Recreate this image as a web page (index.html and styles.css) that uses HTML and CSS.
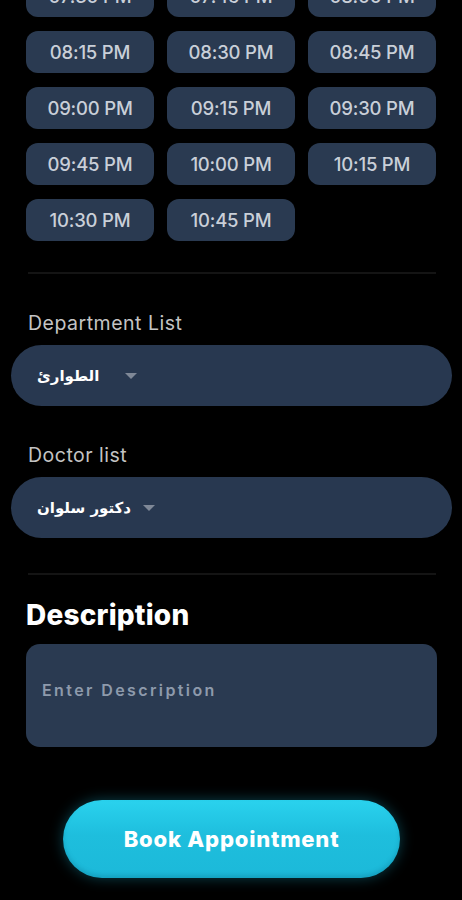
FILE: index.html
```html
<!DOCTYPE html>
<html lang="en">
<head>
<meta charset="utf-8">
<link rel="stylesheet" href="styles.css">
</head>
<body>
<div class="page">
  <div class="slots">
    <div class="slot">07:30 PM</div>
    <div class="slot">07:45 PM</div>
    <div class="slot">08:00 PM</div>
    <div class="slot">08:15 PM</div>
    <div class="slot">08:30 PM</div>
    <div class="slot">08:45 PM</div>
    <div class="slot">09:00 PM</div>
    <div class="slot">09:15 PM</div>
    <div class="slot">09:30 PM</div>
    <div class="slot">09:45 PM</div>
    <div class="slot">10:00 PM</div>
    <div class="slot">10:15 PM</div>
    <div class="slot">10:30 PM</div>
    <div class="slot">10:45 PM</div>
  </div>

  <hr class="divider first">

  <div class="field dept">
    <div class="label">Department List</div>
    <div class="select">
      <span class="value" dir="rtl">الطوارئ</span>
      <span class="caret caret-dept"></span>
    </div>
  </div>

  <div class="field doctor">
    <div class="label">Doctor list</div>
    <div class="select">
      <span class="value" dir="rtl">دكتور سلوان</span>
      <span class="caret caret-doc"></span>
    </div>
  </div>

  <hr class="divider second">

  <h2 class="title">Description</h2>
  <div class="textarea">
    <span class="placeholder">Enter Description</span>
  </div>

  <div class="actions">
    <button class="book">Book Appointment</button>
  </div>
</div>
</body>
</html>
```

FILE: styles.css
```css
* { box-sizing: border-box; }
html, body {
  margin: 0;
  background: #000;
  height: 900px;
  overflow: hidden;
}
body {
  font-family: "Inter", "DejaVu Sans", sans-serif;
}
.page {
  display: flex;
  flex-direction: column;
}
.slots {
  display: grid;
  grid-template-columns: repeat(3, 128px);
  column-gap: 13px;
  row-gap: 14px;
  margin: -25px 0 0 26px;
}
.slot {
  height: 42px;
  border-radius: 12px;
  background: #2a3a51;
  color: #c9cfd8;
  font-size: 18.5px;
  font-weight: 500;
  letter-spacing: -0.2px;
  display: flex;
  align-items: center;
  justify-content: center;
}
.divider {
  border: 0;
  height: 2px;
  background: #141414;
  margin: 0 26px 0 28px;
}
.divider.first { margin-top: 31px; }
.divider.second { margin-top: 35px; }
.field { display: flex; flex-direction: column; }
.dept { margin-top: 38px; }
.doctor { margin-top: 38px; }
.label {
  color: #c4c4c4;
  font-size: 19.5px;
  font-weight: 400;
  padding-left: 28px;
  line-height: 22px;
  letter-spacing: 0.5px;
}
.select {
  margin: 11px 10px 0 11px;
  height: 61px;
  border-radius: 31px;
  background: #283850;
  display: flex;
  align-items: center;
  padding-left: 26px;
}
.value {
  color: #fff;
  font-family: "DejaVu Sans", sans-serif;
  font-weight: 700;
  font-size: 15px;
}
.caret {
  width: 0;
  height: 0;
  border-left: 6px solid transparent;
  border-right: 6px solid transparent;
  border-top: 6px solid #7f8897;
}
.caret-dept { margin-left: 26px; }
.caret-doc { margin-left: 12px; }
.title {
  margin: 24px 0 0 26px;
  color: #fff;
  font-size: 28px;
  font-weight: 800;
  line-height: 32px;
  letter-spacing: 0.2px;
}
.textarea {
  margin: 13px 25px 0 26px;
  height: 103px;
  border-radius: 14px;
  background: #2a3a51;
  padding: 36px 16px 0 16px;
}
.placeholder {
  color: #8e9aac;
  font-size: 16px;
  font-weight: 600;
  letter-spacing: 2.4px;
}
.actions {
  display: flex;
  padding-left: 63px;
  margin-top: 53px;
}
.book {
  width: 337px;
  height: 78px;
  border: 0;
  border-radius: 39px;
  background: linear-gradient(#2ad2ee, #1ebedd 45%, #1cb9d9);
  color: #fff;
  font-family: "Inter", "DejaVu Sans", sans-serif;
  font-size: 22px;
  font-weight: 800;
  letter-spacing: 0.8px;
  box-shadow: 0 0 14px rgba(30, 190, 220, 0.35), inset 0 -3px 4px rgba(0, 90, 120, 0.25);
}
```
